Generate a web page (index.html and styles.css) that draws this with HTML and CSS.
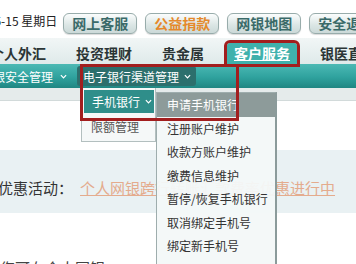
FILE: index.html
```html
<!DOCTYPE html>
<html lang="zh-CN">
<head>
  <meta charset="UTF-8">
  <meta name="viewport" content="width=device-width, initial-scale=1.0">
  <title>客户服务 - 电子银行渠道管理</title>
  <link rel="stylesheet" href="styles.css">
</head>
<body>
  <div id="page">
    <div class="top">
      <span class="date">2011-05-15 星期日</span>
      <a href="javascript:;" class="btn">网上客服</a>
      <a href="javascript:;" class="btn orange">公益捐款</a>
      <a href="javascript:;" class="btn">网银地图</a>
      <a href="javascript:;" class="btn">安全退出</a>
    </div>
    <ul class="tabs">
      <li>个人外汇</li>
      <li>投资理财</li>
      <li>贵金属</li>
      <li class="on"><a href="javascript:;">客户服务</a></li>
      <li>银医直通车</li>
    </ul>
    <div class="subnav">
      <span class="sn">网银安全管理<svg class="arr" viewBox="0 0 8 5"><polyline points="1,1 4,4 7,1"/></svg></span>
      <span class="sn on">电子银行渠道管理<svg class="arr" viewBox="0 0 8 5"><polyline points="1,1 4,4 7,1"/></svg></span>
      <!-- 下拉菜单 -->
      <div class="drop">
        <div class="drop-l">
          <div class="pill">手机银行<svg class="arr" viewBox="0 0 8 5"><polyline points="1,1 4,4 7,1"/></svg></div>
          <div class="drop-item">限额管理</div>
        </div>
        <ul class="drop-r">
          <li class="on">申请手机银行</li>
          <li>注册账户维护</li>
          <li>收款方账户维护</li>
          <li>缴费信息维护</li>
          <li>暂停/恢复手机银行</li>
          <li>取消绑定手机号</li>
          <li>绑定新手机号</li>
        </ul>
      </div>
    </div>
    <div class="strip"></div>
    <div class="promo">
      <span class="label">优惠活动：</span>
      <a href="javascript:;" class="promo-link">个人网银跨行转账汇款费率优惠进行中</a>
    </div>
    <p class="note">您可在个人网银</p>
    <!-- 标注框 -->
    <div class="mark"></div>
  </div>
</body>
</html>
```

FILE: styles.css
```css
* {margin: 0; padding: 0;}
body{
  background: #fff;
  font-family: "Noto Sans CJK SC", "Noto Sans", sans-serif;
  color: #333;
}
a {
  text-decoration: none;
}
#page {
  position: relative;
  width: 356px;
  height: 264px;
  overflow: hidden;
}
.top {
  height: 30px;
  padding-top: 8px;
  display: flex;
  align-items: center;
  gap: 8px;
  white-space: nowrap;
}
.date {
  font-size: 12px;
  color: #222;
  margin-left: -43px;
  margin-right: -2px;
  margin-bottom: 5px;
}
.btn {
  display: block;
  height: 19px;
  line-height: 19px;
  padding: 0 8px;
  border: 1px solid #98acab;
  border-radius: 6px;
  background: linear-gradient(#fbfdfd, #dae5e4 60%, #cbd9d8);
  box-shadow: 0 1px 1px rgba(0,0,0,0.15);
  font-size: 14px;
  font-weight: bold;
  color: #3a6a69;
}
.btn.orange {
  color: #e5892b;
}
.tabs {
  list-style: none;
  height: 26px;
  display: flex;
  align-items: flex-end;
  gap: 16px;
  padding-left: 0;
  margin-left: -17px;
  background: linear-gradient(#f1f6f6, #dfeaea);
  white-space: nowrap;
}
.tabs li {
  height: 21px;
  line-height: 21px;
  padding: 0 7px 0;
  font-size: 14px;
  font-weight: bold;
  color: #2b3535;
  position: relative;
}
.tabs li.on {
  background: #3fb1ac;
  border-radius: 3px 3px 0 0;
  outline: 3px solid #a21e1e;
  z-index: 2;
}
.tabs li.on a {
  color: #fff;
  text-decoration: underline;
}
.subnav {
  position: relative;
  height: 24px;
  display: flex;
  align-items: center;
  background: linear-gradient(#4cb9b4, #2fa29e 55%, #1f8682);
  white-space: nowrap;
}
.sn {
  display: flex;
  align-items: center;
  flex-shrink: 0;
  height: 20px;
  font-size: 12px;
  color: #fff;
}
.sn:first-child {
  margin-left: -27px;
  padding: 0 8px;
}
.sn.on {
  margin-left: 2px;
  padding: 0 5px 0 6px;
  background: #2c6f6d;
  border-radius: 3px;
}
.arr {
  width: 7px;
  height: 5px;
  margin-left: 7px;
  fill: none;
  stroke: #fff;
  stroke-width: 1.4;
}
.sn.on .arr {
  margin-left: 5px;
}
.drop {
  position: absolute;
  left: 81px;
  top: 24px;
  display: flex;
  align-items: flex-start;
  z-index: 1;
}
.drop-l {
  width: 73px;
  border: 1px solid #b3bfbf;
  border-top: none;
  background: #f5f8f8;
  padding-top: 2px;
}
.pill {
  display: flex;
  align-items: center;
  width: 62px;
  height: 23px;
  margin-left: 2px;
  padding-left: 8px;
  background: #2f8e8a;
  color: #fff;
  font-size: 12px;
}
.pill .arr {
  margin-left: 5px;
}
.drop-item {
  height: 28px;
  line-height: 28px;
  padding-left: 9px;
  font-size: 12px;
  color: #555;
}
.drop-r {
  list-style: none;
  width: 118px;
  margin-top: 4px;
  border: 1px solid #9eadad;
  border-right: 2px solid #8b9b9b;
  background: rgba(243, 248, 248, 0.95);
  padding-bottom: 20px;
}
.drop-r li {
  height: 23.5px;
  line-height: 23.5px;
  padding-left: 10px;
  font-size: 12px;
  color: #333;
}
.drop-r li.on {
  background: #8d9b9a;
  color: #fff;
}
.strip {
  height: 12px;
  background: #e5ebeb;
  border-bottom: 1px solid #d2dada;
}
.promo {
  margin-top: 49px;
  height: 51px;
  padding-top: 12px;
  display: flex;
  align-items: center;
  background: #e9f1f3;
  font-size: 15px;
  white-space: nowrap;
}
.label {
  margin-left: -2px;
  color: #333;
}
.promo-link {
  margin-left: 7px;
  color: #e4ab8d;
  text-decoration: underline;
}
.note {
  margin-top: 45px;
  font-size: 15px;
  line-height: 20px;
  color: #444;
}
.mark {
  position: absolute;
  left: 80px;
  top: 64px;
  width: 159px;
  height: 57px;
  box-sizing: border-box;
  border: 3px solid #a21e1e;
  z-index: 3;
}
```
